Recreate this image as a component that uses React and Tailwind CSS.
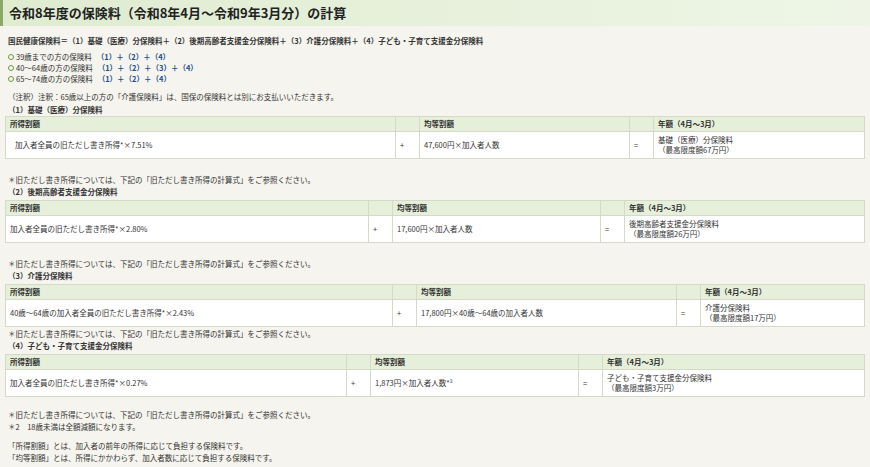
const F = { fontFamily: '"Noto Sans CJK JP", "Noto Sans", sans-serif' };

function T({ cols, a, b, c1, c2 }) {
  const [w1, w2, w3, w4] = cols;
  return (
    <table className="mx-[5px] w-[860px] border-collapse table-fixed text-[7.5px] text-[#333]">
      <colgroup>
        <col style={{ width: w1 }} />
        <col style={{ width: 24 }} />
        <col style={{ width: w3 }} />
        <col style={{ width: 24 }} />
        <col />
      </colgroup>
      <tbody>
        <tr className="h-[15px] bg-[#e5efd9] font-bold">
          <td className="border border-[#d4d9c8] px-[4px]">所得割額</td>
          <td className="border border-[#d4d9c8]"></td>
          <td className="border border-[#d4d9c8] px-[4px]">均等割額</td>
          <td className="border border-[#d4d9c8]"></td>
          <td className="border border-[#d4d9c8] px-[4px]">年額（4月～3月）</td>
        </tr>
        <tr className="h-[27px] bg-white">
          <td className="border border-[#d4d9c8] px-[4px]">{a}</td>
          <td className="border border-[#d4d9c8] px-[4px]">+</td>
          <td className="border border-[#d4d9c8] px-[4px]">{b}</td>
          <td className="border border-[#d4d9c8] px-[4px]">=</td>
          <td className="border border-[#d4d9c8] px-[4px] leading-[10px]">{c1}<br />（{c2}）</td>
        </tr>
      </tbody>
    </table>
  );
}

const H = ({ children, className = "" }) => (
  <div className={"px-[8px] font-bold text-[7.5px] leading-[12px] " + className}>{children}</div>
);
const P = ({ children, className = "" }) => (
  <div className={"px-[8px] text-[7.5px] leading-[12px] " + className}>{children}</div>
);
const B = ({ t, f }) => (
  <div className="flex items-center gap-[2px] leading-[11px]">
    <span className="inline-block w-[6px] h-[6px] rounded-full border border-[#6a9b3a]"></span>
    <span>{t}</span>
    <span className="text-[#1d4f8c] font-bold ml-[3px]">{f}</span>
  </div>
);

export default function App() {
  const fn = "＊旧ただし書き所得については、下記の「旧ただし書き所得の計算式」をご参照ください。";
  return (
    <div style={F} className="w-[870px] h-[467px] overflow-hidden bg-[#f5f4ee] text-[#333]">
      <div className="h-[26px] border-l-[3px] border-[#8aa86a] bg-gradient-to-r from-[#dfecd0] to-[#eef5e6] flex items-center px-[6px] text-[13px] font-bold text-[#222]">
        令和8年度の保険料（令和8年4月～令和9年3月分）の計算
      </div>
      <H className="mt-[9px]">国民健康保険料＝（1）基礎（医療）分保険料＋（2）後期高齢者支援金分保険料＋（3）介護分保険料＋（4）子ども・子育て支援金分保険料</H>
      <div className="px-[8px] mt-[4px] text-[7.5px]">
        <B t="39歳までの方の保険料" f="（1）＋（2）＋（4）" />
        <B t="40～64歳の方の保険料" f="（1）＋（2）＋（3）＋（4）" />
        <B t="65～74歳の方の保険料" f="（1）＋（2）＋（4）" />
      </div>
      <P className="mt-[7px]">（注釈）注釈：65歳以上の方の「介護保険料」は、国保の保険料とは別にお支払いいただきます。</P>
      <H className="mt-[1px]">（1）基礎（医療）分保険料</H>
      <T cols={[390, 24, 210, 24]} a={<span className="pl-[5px]">加入者全員の旧ただし書き所得*×7.51%</span>} b="47,600円×加入者人数" c1="基礎（医療）分保険料" c2="最高限度額67万円" />
      <P className="mt-[15px]">{fn}</P>
      <H className="mb-[2px]">（2）後期高齢者支援金分保険料</H>
      <T cols={[363, 24, 208, 24]} a="加入者全員の旧ただし書き所得*×2.80%" b="17,600円×加入者人数" c1="後期高齢者支援金分保険料" c2="最高限度額26万円" />
      <P className="mt-[15px]">{fn}</P>
      <H className="mb-[2px]">（3）介護分保険料</H>
      <T cols={[387, 24, 260, 24]} a="40歳～64歳の加入者全員の旧ただし書き所得*×2.43%" b="17,800円×40歳～64歳の加入者人数" c1="介護分保険料" c2="最高限度額17万円" />
      <P className="mt-[1px]">{fn}</P>
      <H className="mb-[2px]">（4）子ども・子育て支援金分保険料</H>
      <T cols={[341, 24, 208, 24]} a="加入者全員の旧ただし書き所得*×0.27%" b="1,873円×加入者人数*²" c1="子ども・子育て支援金分保険料" c2="最高限度額3万円" />
      <P className="mt-[12px]">{fn}</P>
      <P>＊2　18歳未満は全額減額になります。</P>
      <P className="mt-[7px]">「所得割額」とは、加入者の前年の所得に応じて負担する保険料です。</P>
      <P>「均等割額」とは、所得にかかわらず、加入者数に応じて負担する保険料です。</P>
    </div>
  );
}
